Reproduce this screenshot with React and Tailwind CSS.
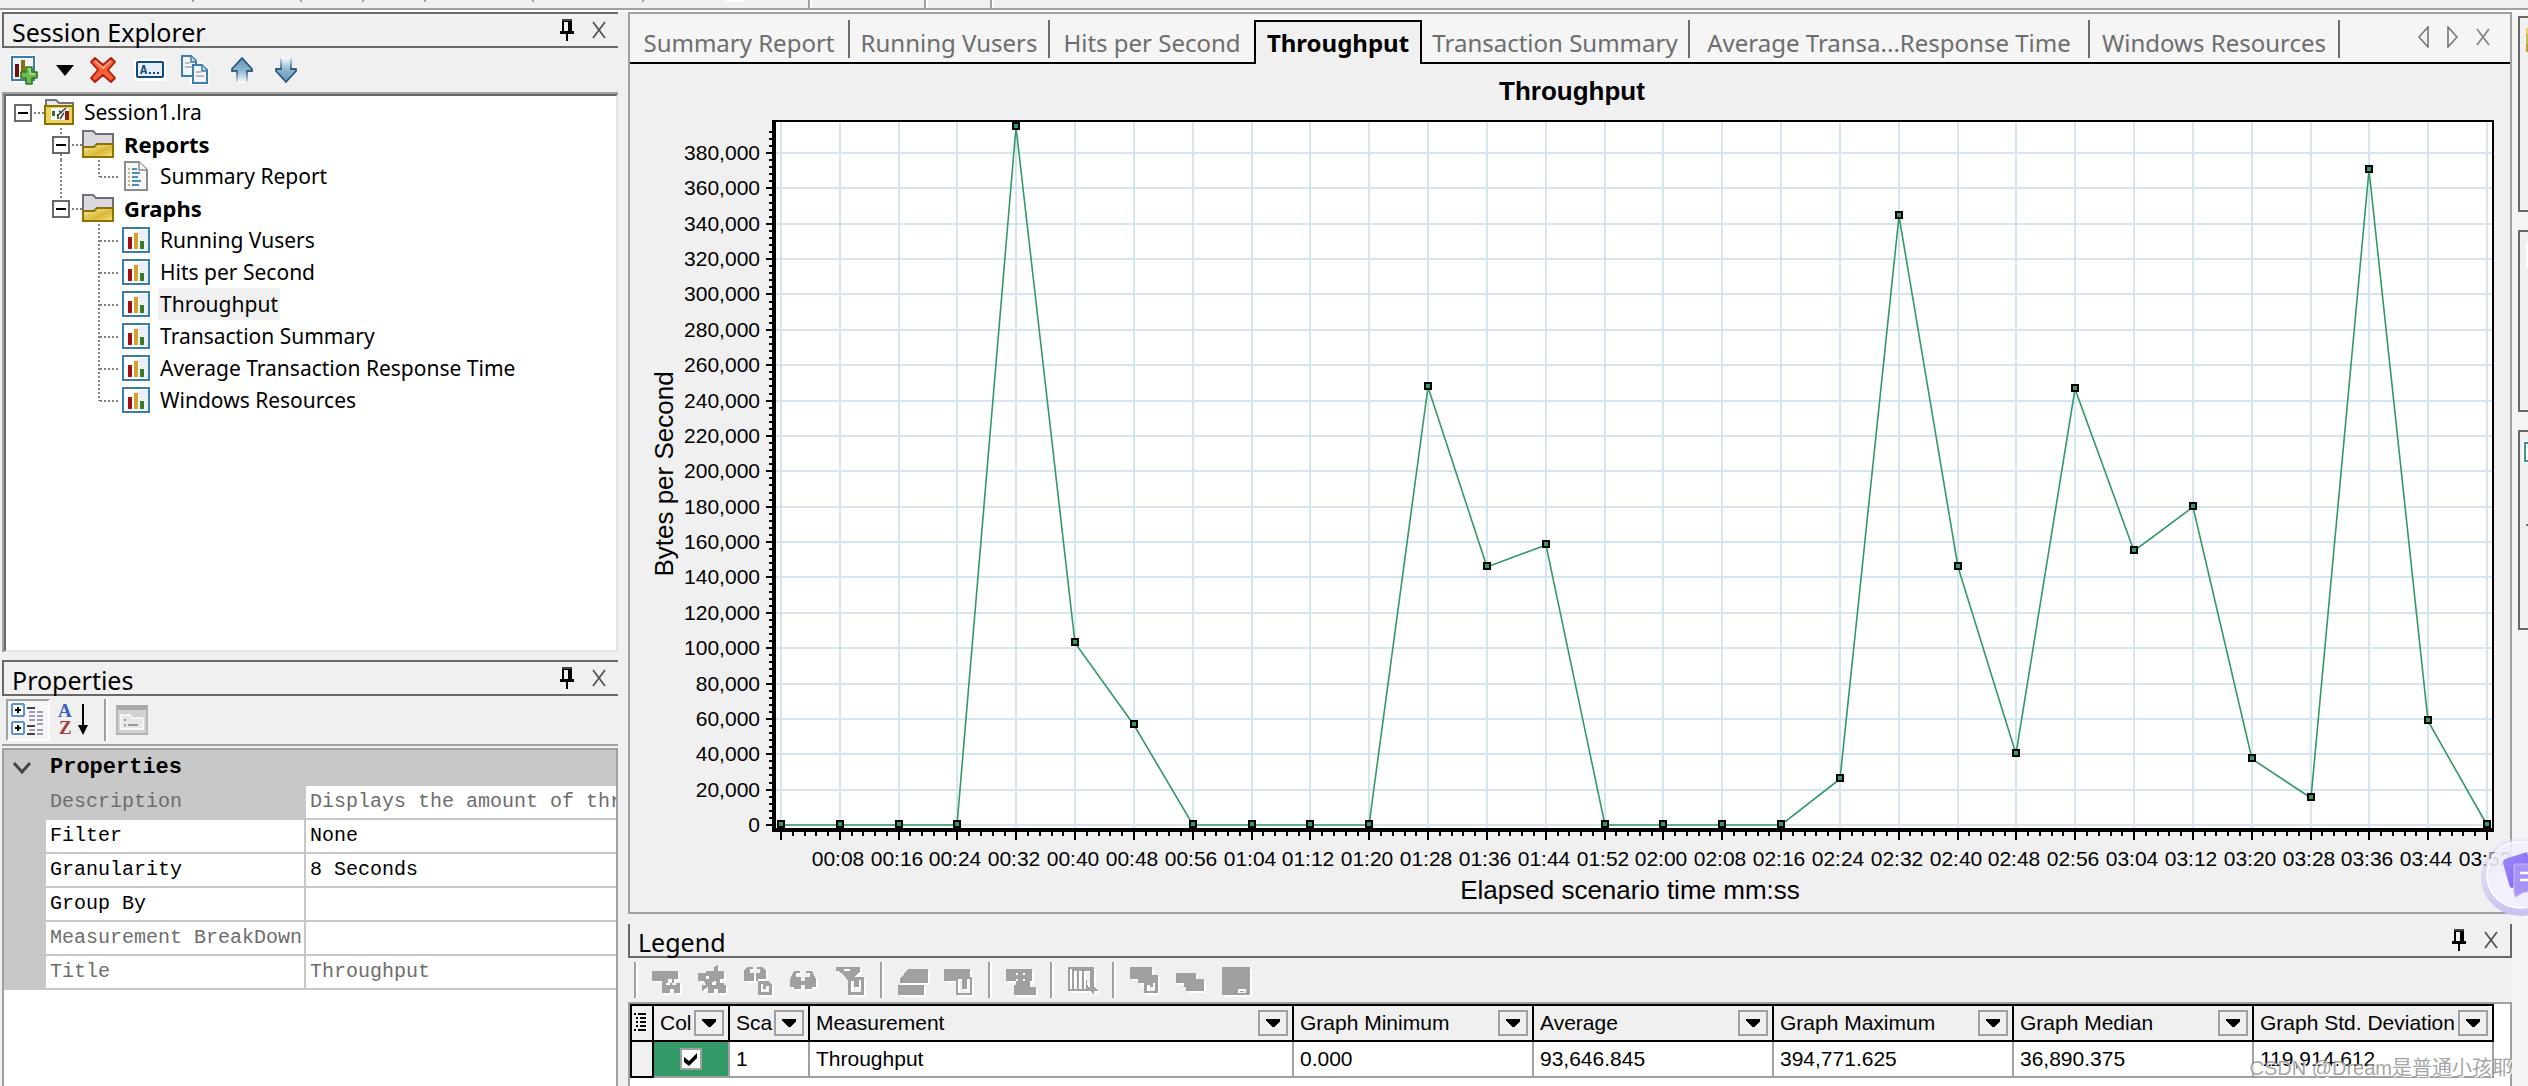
import { useState } from 'react';

const UI_FONT = "font-['Noto_Sans','Open_Sans',sans-serif]";
const GRID_FONT = "font-['Liberation_Sans',Arial,sans-serif]";

const treeGraphs = [
  'Running Vusers',
  'Hits per Second',
  'Throughput',
  'Transaction Summary',
  'Average Transaction Response Time',
  'Windows Resources',
];

const tabs = [
  { name: 'Summary Report', width: 'w-[220px]' },
  { name: 'Running Vusers', width: 'w-[200px]' },
  { name: 'Hits per Second', width: 'w-[204px]' },
  { name: 'Throughput', width: 'w-[168px]' },
  { name: 'Transaction Summary', width: 'w-[268px]' },
  { name: 'Average Transa...Response Time', width: 'w-[400px]' },
  { name: 'Windows Resources', width: 'w-[250px]' },
];

const properties = [
  { name: 'Description', value: 'Displays the amount of throughput', readOnly: true, selected: true },
  { name: 'Filter', value: 'None' },
  { name: 'Granularity', value: '8 Seconds' },
  { name: 'Group By', value: '' },
  { name: 'Measurement BreakDown', value: '', readOnly: true },
  { name: 'Title', value: 'Throughput', readOnly: true },
];

// Bytes per second, one sample every 8 seconds
const samples = [
  0, 0, 0, 0, 394771, 102900, 56700, 0, 0, 0, 0, 247700, 146000, 158300, 0, 0, 0, 0,
  26200, 344400, 146000, 39900, 246800, 155200, 179800, 37600, 15300, 370400, 59000, 0,
];

const legendColumns = [
  { name: 'Col', value: null },
  { name: 'Sca', value: '1' },
  { name: 'Measurement', value: 'Throughput' },
  { name: 'Graph Minimum', value: '0.000' },
  { name: 'Average', value: '93,646.845' },
  { name: 'Graph Maximum', value: '394,771.625' },
  { name: 'Graph Median', value: '36,890.375' },
  { name: 'Graph Std. Deviation', value: '119,914.612' },
];

/* ---------- icons ---------- */

const PinIcon = () => (
  <svg width="14" height="22" viewBox="0 0 14 22" shapeRendering="crispEdges">
    <path d="M2 0H12V12H14V15H8V22H6V15H0V12H2Z" fill="#000" />
    <path d="M4 3H8V12H4Z" fill="#f0f0f0" />
    <path d="M2 0H12V2H2Z" fill="#444" />
  </svg>
);

const CloseIcon = ({ color = '#555' }) => (
  <svg width="14" height="18" viewBox="0 0 14 18">
    <path d="M1 1L13 17M13 1L1 17" stroke={color} strokeWidth="1.8" fill="none" />
  </svg>
);

const AddGraphIcon = () => (
  <svg width="28" height="30" viewBox="0 0 28 30">
    <path d="M0 0H26V28H0Z" fill="#fff" />
    <path d="M2 2H24V25H2Z" fill="#eef4f8" stroke="#3c7fa6" strokeWidth="2" />
    <path d="M5 9H9V22H5Z" fill="#6d0f10" />
    <path d="M11 5H15V20H11Z" fill="#8c6a14" />
    <path d="M16 12H22V17H27V23H22V29H16V23H11V17H16Z" fill="#6db84f" stroke="#2f7a22" strokeWidth="1.6" strokeLinejoin="round" />
    <path d="M18 14H20V19H25" stroke="#b6e29c" strokeWidth="1.4" fill="none" />
  </svg>
);

const CaretIcon = () => (
  <svg width="18" height="11" viewBox="0 0 18 11">
    <path d="M0 0H18L9 11Z" fill="#000" />
  </svg>
);

const DeleteIcon = () => (
  <svg width="26" height="26" viewBox="0 0 26 26">
    <path
      d="M5 1L13 8L21 1L25 5L18 13L25 21L21 25L13 18L5 25L1 21L8 13L1 5Z"
      fill="#f4603a"
      stroke="#b31d0c"
      strokeWidth="1.8"
      strokeLinejoin="round"
    />
    <path d="M5 4L13 11L21 4" stroke="#ff9d7c" strokeWidth="2" fill="none" />
  </svg>
);

const RenameIcon = () => (
  <svg width="32" height="22" viewBox="0 0 32 22">
    <rect x="0" y="0" width="32" height="22" fill="#fff" />
    <rect x="3" y="3" width="26" height="15" rx="1" fill="#e3eef6" stroke="#12487c" strokeWidth="2" />
    <text x="6" y="15" fontSize="12" fontWeight="bold" fill="#12487c" fontFamily="Liberation Mono, monospace">A</text>
    <path d="M15 13H17V15H15ZM19 13H21V15H19ZM23 13H25V15H23Z" fill="#12487c" />
  </svg>
);

const CopyIcon = () => (
  <svg width="30" height="32" viewBox="0 0 30 32">
    <path d="M10 9H23L29 15V31H10Z" fill="#fff" />
    <path d="M2 2H11L16 7V22H2Z" fill="#f2f6fa" stroke="#3c7fa6" strokeWidth="2" />
    <path d="M11 2V8H16" fill="#bcdcec" stroke="#3c7fa6" strokeWidth="1.5" />
    <path d="M5 9H10M5 13H12" stroke="#b8bcc0" strokeWidth="2" />
    <path d="M13 11H22L27 16V29H13Z" fill="#f2f6fa" stroke="#3c7fa6" strokeWidth="2" />
    <path d="M22 11V17H27" fill="#bcdcec" stroke="#3c7fa6" strokeWidth="1.5" />
    <path d="M16 18H21M16 22H24" stroke="#b8bcc0" strokeWidth="2" />
  </svg>
);

const ArrowIcon = ({ down }) => (
  <svg width="26" height="28" viewBox="0 0 26 28" className={down ? 'rotate-180' : ''}>
    <defs>
      <linearGradient id="arrowFill" x1="0" y1="0" x2="0" y2="1">
        <stop offset="0" stopColor="#5f93b8" />
        <stop offset="0.5" stopColor="#8fb8cc" />
        <stop offset="1" stopColor="#fff" />
      </linearGradient>
      <linearGradient id="arrowEdge" x1="0" y1="0" x2="0" y2="1">
        <stop offset="0.5" stopColor="#24557f" />
        <stop offset="1" stopColor="#c8d8e4" />
      </linearGradient>
    </defs>
    <path d="M13 2L23 13V15H18V27H8V15H3V13Z" fill="url(#arrowFill)" />
    <path d="M8 26V15H3V13L13 2L23 13V15H18V26" stroke="url(#arrowEdge)" strokeWidth="1.8" fill="none" />
  </svg>
);

const SessionIcon = () => (
  <svg width="32" height="28" viewBox="0 0 32 28">
    <path d="M2 7V2H12L15 5H29V10" fill="#e8e8ec" stroke="#73737b" strokeWidth="2" />
    <path d="M1 8H29V26H1Z" fill="#ecd25a" stroke="#8a7300" strokeWidth="2" />
    <path d="M7 10H25V22H7Z" fill="#fff" />
    <path d="M8 13H11V18H8ZM13 16H15V21H13Z" fill="#3e6e33" />
    <path d="M13 18L22 10M15 13L18 15M16 21L20 15" stroke="#444" strokeWidth="1.6" />
    <path d="M21 13H25V22H21Z" fill="#8a1d12" />
  </svg>
);

const FolderIcon = () => (
  <svg width="32" height="30" viewBox="0 0 32 30">
    <defs>
      <linearGradient id="folderFront" x1="0" y1="0" x2="1" y2="1">
        <stop offset="0" stopColor="#f7ebb0" />
        <stop offset="0.6" stopColor="#dcb836" />
        <stop offset="1" stopColor="#f2e48c" />
      </linearGradient>
    </defs>
    <path d="M1 27V2H11L14 5H31V20H1Z" fill="#d8d8de" stroke="#6e6e78" strokeWidth="2" />
    <path d="M1 18H12L15 15H31V28H1Z" fill="url(#folderFront)" stroke="#8a7300" strokeWidth="2" />
  </svg>
);

const ReportIcon = () => (
  <svg width="32" height="30" viewBox="0 0 32 30">
    <path d="M3 1H17L25 9V29H3Z" fill="#f6f6f6" stroke="#8c8c8c" strokeWidth="2" />
    <path d="M17 1V9H25" fill="#fff" stroke="#8c8c8c" strokeWidth="1.6" />
    <path d="M6 8H8M6 12H8M6 16H8M6 20H8M6 24H8" stroke="#c39a46" strokeWidth="1.6" />
    <path d="M10 8H15M10 12H18M10 16H16M10 20H19M10 24H17" stroke="#4c8fb4" strokeWidth="2" />
  </svg>
);

const GraphIcon = () => (
  <svg width="32" height="26" viewBox="0 0 32 26" shapeRendering="crispEdges">
    <path d="M1 1H27V25H1Z" fill="#fff" stroke="#3c7fa6" strokeWidth="2" />
    <path d="M17 3H26V24H17Z" fill="#eaf0f4" />
    <path d="M6 10H10V22H6Z" fill="#a01010" />
    <path d="M12 6H16V22H12Z" fill="#d2a22a" />
    <path d="M18 14H22V22H18Z" fill="#3f7a2c" />
  </svg>
);

const CategorizedIcon = () => (
  <svg width="34" height="34" viewBox="0 0 34 34" shapeRendering="crispEdges">
    <rect x="1" y="1" width="12" height="12" rx="2" fill="#fff" stroke="#5b93cf" strokeWidth="2" />
    <rect x="1" y="19" width="12" height="12" rx="2" fill="#fff" stroke="#5b93cf" strokeWidth="2" />
    <path d="M4 7H10M7 4V10M4 25H10M7 22V28" stroke="#000" strokeWidth="2" />
    <path d="M16 5H24M16 23H24M16 31H24" stroke="#444" strokeWidth="2" />
    <path d="M18 9H24M18 13H24M18 17H24M18 27H24M26 9H32M26 13H32M26 17H32M26 21H32M26 27H32M26 31H32" stroke="#a29bb5" strokeWidth="2" />
  </svg>
);

const SortIcon = () => (
  <svg width="32" height="34" viewBox="0 0 32 34">
    <text x="0" y="14" fontSize="19" fontWeight="bold" fill="#3a5fc4" fontFamily="Liberation Serif, serif">A</text>
    <text x="1" y="31" fontSize="19" fontWeight="bold" fill="#a83a3a" fontFamily="Liberation Serif, serif">Z</text>
    <path d="M25 1V24" stroke="#000" strokeWidth="2" />
    <path d="M20 22H30L25 32Z" fill="#000" />
  </svg>
);

const PropertyPagesIcon = () => (
  <svg width="32" height="30" viewBox="0 0 32 30">
    <rect x="1" y="1" width="30" height="28" fill="#d2d2d2" stroke="#b4b4b4" strokeWidth="2" />
    <path d="M0 0H32V5H0Z" fill="#aaa" />
    <path d="M5 10H14L16 13H27V24H5Z" fill="#e6e6e6" stroke="#f4f4f4" strokeWidth="2" />
    <path d="M8 15H10M8 20H10M12 20H22" stroke="#999" strokeWidth="2" />
  </svg>
);

// Disabled toolbar glyphs, embossed with a white shadow
const legendIcons = {
  show: 'M0 8H26V16H22V20H20V16H16V20H10V18H0ZM10 20H14V22H18V20H20V22H24V20H28V30H22V26H18V30H10Z',
  animate: 'M16 4L20 2V8H26V16H22V20H26V22H28V30H20V26H16V30H10V24L4 28V22H8L6 18H0V10H8V8H16ZM8 13V16H11V13ZM14 19V22H18V18Z',
  linkDoc: 'M0 7L4 4H9V6H6V10H10V18H0ZM12 10H16V6H13V4H18L22 7V16H14V18H12ZM14 18H24L28 22V32H14ZM17 21V29H25V23H22V26H19V21Z',
  glasses: 'M0 16L4 8H10V10H6V14H11V18H15V14H20V10H16V8H22L26 16V24H22V26H15V22H11V26H4V24H0Z',
  filterDoc: 'M0 4H24V8L18 14H28V32H12V18L8 12L2 8H0ZM8 6V8H14V6ZM15 18V29H25V17H23V24H18V18Z',
  sheets: 'M10 6H30V20H2V16ZM0 22H26V32H0Z',
  sheetDoc: 'M0 6H26V14H28V32H12V18H0ZM14 16V30H26V16H23V26H18V16Z',
  merge: 'M0 6H26V18H24V24H30V32H8V22H10V18H0ZM10 10V12H12V10ZM17 10V12H19V10ZM10 16V18H12V16ZM17 16V18H19V16Z',
  columns: 'M0 4H26V24L30 28H26V32L22 28H0ZM2 6V26H4V6ZM6 8V26H9V8ZM11 8V26H14V8ZM16 8V26H18V14L20 24H22V8Z',
  layers: 'M0 4H22V12H28V30H14V20H8V16H0ZM17 22V28H25V20H23V24H20V22Z',
  blocks: 'M0 10H20V16H28V28H10V24H8V20H0Z',
  note: 'M0 4H28V32H0ZM16 26V30H24V26ZM18 28H22V29H18Z',
};

const legendToolbar = [
  ['show', 'animate', 'linkDoc', 'glasses', 'filterDoc'],
  ['sheets', 'sheetDoc'],
  ['merge'],
  ['columns'],
  ['layers', 'blocks', 'note'],
];

const LegendIcon = ({ name }) => (
  <svg
    width="30"
    height="34"
    viewBox="0 0 30 34"
    shapeRendering="crispEdges"
    className="overflow-visible drop-shadow-[2px_2px_0_#ffffff]"
  >
    <path d={legendIcons[name]} fill="#a0a0a0" fillRule="evenodd" />
  </svg>
);

/* ---------- shared parts ---------- */

const PanelHeader = ({ title, className = '' }) => (
  <div className={`flex items-center justify-between border-b-2 border-l-2 border-[#696969] pl-2 pr-3 ${className}`}>
    <h2 className="pt-1 text-[25px] leading-8 whitespace-nowrap">{title}</h2>
    <div className="flex items-center gap-[18px]">
      <button type="button" aria-label="Auto Hide"><PinIcon /></button>
      <button type="button" aria-label="Close"><CloseIcon /></button>
    </div>
  </div>
);

const Expander = ({ above, below, label }) => (
  <button type="button" aria-label={label} className="h-8 w-[18px]">
    <svg width="18" height="32" viewBox="0 0 18 32" shapeRendering="crispEdges">
      {above && <path d="M9 0V8" stroke="#808080" strokeWidth="2" strokeDasharray="2 2" />}
      {below && <path d="M9 26V32" stroke="#808080" strokeWidth="2" strokeDasharray="2 2" />}
      <rect x="1" y="9" width="16" height="16" fill="#fff" stroke="#696969" strokeWidth="2" />
      <path d="M4 17H14" stroke="#000" strokeWidth="2" />
    </svg>
  </button>
);

const Dots = () => (
  <svg width="12" height="32" viewBox="0 0 12 32" shapeRendering="crispEdges">
    <path d="M2 17H12" stroke="#808080" strokeWidth="2" strokeDasharray="2 2" />
  </svg>
);

const LeafRow = ({ label, icon, outer, last, selected }) => (
  <li className="flex h-8 items-center pl-12">
    <svg width="70" height="32" viewBox="0 0 70 32" shapeRendering="crispEdges">
      {outer && <path d="M9 0V32" stroke="#808080" strokeWidth="2" strokeDasharray="2 2" />}
      <path d={last ? 'M47 0V17' : 'M47 0V32'} stroke="#808080" strokeWidth="2" strokeDasharray="2 2" />
      <path d="M48 17H68" stroke="#808080" strokeWidth="2" strokeDasharray="2 2" />
    </svg>
    {icon}
    <span className={`ml-1 h-8 px-0.5 leading-8 ${selected ? 'bg-[#f0f0f0]' : ''}`}>{label}</span>
  </li>
);

/* ---------- left column ---------- */

const SessionExplorer = () => (
  <section className="flex flex-col">
    <PanelHeader title="Session Explorer" className="h-9 border-t-2" />
    <div className="flex h-11 items-center pl-2">
      <button type="button" aria-label="Add graph" className="w-[34px]"><AddGraphIcon /></button>
      <button type="button" aria-label="More graphs" className="ml-3 w-[34px]"><CaretIcon /></button>
      <button type="button" aria-label="Delete" className="w-[44px]"><DeleteIcon /></button>
      <button type="button" aria-label="Rename" className="w-[46px]"><RenameIcon /></button>
      <button type="button" aria-label="Duplicate" className="w-[49px]"><CopyIcon /></button>
      <button type="button" aria-label="Move up" className="w-[44px]"><ArrowIcon /></button>
      <button type="button" aria-label="Move down" className="w-[44px]"><ArrowIcon down /></button>
    </div>
    <div className="border-t-2 border-l-2 border-[#a0a0a0]">
      <div className="min-h-[558px] border-2 border-t-[#696969] border-r-[#e3e3e3] border-b-[#e3e3e3] border-l-[#696969] bg-white text-[21px]">
        <ul>
          <li>
            <div className="flex h-8 items-center pl-2">
              <Expander label="Collapse Session1.lra" />
              <Dots />
              <SessionIcon />
              <span className="ml-1 px-1 leading-7">Session1.lra</span>
            </div>
            <ul>
              <li>
                <div className="flex h-8 items-center pl-[46px]">
                  <Expander above below label="Collapse Reports" />
                  <Dots />
                  <FolderIcon />
                  <span className="ml-1.5 px-1 text-[22px] leading-7 font-bold">Reports</span>
                </div>
                <ul className="-ml-0.5">
                  <LeafRow label="Summary Report" icon={<ReportIcon />} outer last />
                </ul>
              </li>
              <li>
                <div className="flex h-8 items-center pl-[46px]">
                  <Expander above label="Collapse Graphs" />
                  <Dots />
                  <FolderIcon />
                  <span className="ml-1.5 px-1 text-[22px] leading-7 font-bold">Graphs</span>
                </div>
                <ul className="-ml-0.5">
                  {treeGraphs.map((name, index) => (
                    <LeafRow
                      key={name}
                      label={name}
                      icon={<GraphIcon />}
                      last={index === treeGraphs.length - 1}
                      selected={name === 'Throughput'}
                    />
                  ))}
                </ul>
              </li>
            </ul>
          </li>
        </ul>
      </div>
    </div>
  </section>
);

const PropertiesPanel = () => (
  <section className="mt-2 flex flex-1 flex-col">
    <PanelHeader title="Properties" className="h-9 border-t-2" />
    <div className="flex h-[50px] items-center border-b-2 border-[#a0a0a0] pl-1">
      <button
        type="button"
        aria-label="Categorized"
        className="flex h-[42px] w-11 items-center justify-center border-2 border-t-[#a0a0a0] border-r-white border-b-white border-l-[#a0a0a0] bg-[#f6f6f6]"
      >
        <CategorizedIcon />
      </button>
      <button type="button" aria-label="Alphabetical" className="flex h-[42px] w-12 items-center justify-center">
        <SortIcon />
      </button>
      <div className="mx-1.5 h-[42px] w-1 border-l-2 border-[#a0a0a0] bg-white"></div>
      <button type="button" aria-label="Property Pages" className="ml-0.5"><PropertyPagesIcon /></button>
    </div>
    <div className="mt-0.5 flex-1 border-2 border-b-0 border-[#a0a0a0] bg-white font-['Liberation_Mono',monospace] text-[20px]">
      <table className="w-full table-fixed border-separate border-spacing-0">
        <colgroup>
          <col className="w-[42px]" />
          <col className="w-[260px]" />
          <col />
        </colgroup>
        <thead>
          <tr className="h-9 bg-[#c8c8c8]">
            <td className="pl-2">
              <svg width="20" height="14" viewBox="0 0 20 14">
                <path d="M2 2L10 11L18 2" stroke="#444" strokeWidth="3" fill="none" />
              </svg>
            </td>
            <th colSpan="2" className="pl-1 text-left text-[22px] leading-8">Properties</th>
          </tr>
        </thead>
        <tbody>
          {properties.map((row) => (
            <tr key={row.name} className={`h-[34px] leading-7 ${row.readOnly ? 'text-[#6d6d6d]' : ''}`}>
              <td className="bg-[#c8c8c8]"></td>
              <td
                className={`overflow-hidden border-r-2 border-b-2 border-[#c8c8c8] pl-1 whitespace-nowrap ${
                  row.selected ? 'bg-[#c8c8c8]' : ''
                }`}
              >
                {row.name}
              </td>
              <td className="overflow-hidden border-b-2 border-[#c8c8c8] pl-1 whitespace-nowrap">{row.value}</td>
            </tr>
          ))}
        </tbody>
      </table>
    </div>
  </section>
);

/* ---------- chart ---------- */

const X0 = 781;
const X_STEP = (2487 - X0) / 29;
const Y0 = 825;
const Y_STEP = 672 / 19;

const xAt = (i) => Math.round(X0 + i * X_STEP);
const yAt = (value) => Math.round(Y0 - (value / 20000) * Y_STEP);

const timeLabel = (i) => {
  const seconds = i * 8;
  const mm = String(Math.floor(seconds / 60)).padStart(2, '0');
  const ss = String(seconds % 60).padStart(2, '0');
  return `${mm}:${ss}`;
};

const ThroughputChart = () => {
  const yTicks = Array.from({ length: 20 }, (_, i) => i * 20000);
  const yMinor = Array.from({ length: 99 }, (_, i) => Math.round(Y0 - (i * Y_STEP) / 5));
  const xMinor = Array.from({ length: 146 }, (_, i) => Math.round(X0 + (i * X_STEP) / 5));

  return (
    <svg viewBox="630 64 1880 848" className={`block h-auto w-full ${GRID_FONT}`} role="img" aria-label="Throughput">
      <text x="1572" y="100" textAnchor="middle" fontSize="26" fontWeight="bold">Throughput</text>

      <rect x="774" y="121" width="1719" height="709" fill="#fff" />
      <g stroke="#d6e4f2" strokeWidth="2" shapeRendering="crispEdges">
        {samples.map((_, i) => (
          <path key={i} d={`M${xAt(i)} 122V829`} />
        ))}
        {yTicks.map((value) => (
          <path key={value} d={`M776 ${yAt(value)}H2492`} />
        ))}
      </g>

      {/* Frame and axes */}
      <g stroke="#000" fill="none" shapeRendering="crispEdges">
        <path d="M772 121H2493V830" strokeWidth="2" />
        <path d="M774 120V832" strokeWidth="4" />
        <path d="M772 830H2494" strokeWidth="4" />
        {yMinor.map((y) => (
          <path key={y} d={`M769 ${y}H772`} strokeWidth="2" />
        ))}
        {yTicks.map((value) => (
          <path key={value} d={`M766 ${yAt(value)}H772`} strokeWidth="2" />
        ))}
        {xMinor.map((x) => (
          <path key={x} d={`M${x} 832V836`} strokeWidth="2" />
        ))}
        {samples.map((_, i) => (
          <path key={i} d={`M${xAt(i)} 832V840`} strokeWidth="2" />
        ))}
      </g>

      <g fontSize="21" textAnchor="end">
        {yTicks.map((value) => (
          <text key={value} x="760" y={yAt(value) + 7}>{value.toLocaleString('en-US')}</text>
        ))}
      </g>
      <g fontSize="21" textAnchor="middle">
        {samples.map((_, i) => i > 0 && (
          <text key={i} x={xAt(i) - 2} y="866">{timeLabel(i)}</text>
        ))}
      </g>
      <text x="1630" y="899" textAnchor="middle" fontSize="26">Elapsed scenario time mm:ss</text>
      <text transform="translate(673 474) rotate(-90)" textAnchor="middle" fontSize="26">Bytes per Second</text>

      {/* Series */}
      <polyline
        points={samples.map((value, i) => `${xAt(i)},${yAt(value)}`).join(' ')}
        fill="none"
        stroke="#339966"
        strokeWidth="1.6"
      />
      {samples.map((value, i) => (
        <rect
          key={i}
          x={xAt(i) - 3}
          y={yAt(value) - 4}
          width="6"
          height="6"
          fill="#339966"
          stroke="#000"
          strokeWidth="2"
          shapeRendering="crispEdges"
        />
      ))}
    </svg>
  );
};

const GraphPanel = () => {
  const [active, setActive] = useState('Throughput');

  return (
    <section className="border-2 border-[#a0a0a0]">
      <div className="flex h-[50px] items-end bg-[#f5f5f5] text-[24px] text-[#6d6d6d]">
        {tabs.map((tab, index) => {
          const isActive = tab.name === active;
          const beforeActive = tabs[index + 1] && tabs[index + 1].name === active;
          return (
            <button
              key={tab.name}
              type="button"
              onClick={() => setActive(tab.name)}
              className={`h-11 shrink-0 border-black pb-1 whitespace-nowrap ${tab.width} ${
                isActive ? 'border-x-2 border-t-2 bg-[#f0f0f0] font-bold text-black' : 'border-b-2'
              }`}
            >
              <span
                className={`block h-[38px] ${isActive ? 'leading-[42px]' : 'leading-[46px]'} ${
                  isActive || beforeActive ? '' : 'border-r-2 border-[#6d6d6d]'
                }`}
              >
                {tab.name}
              </span>
            </button>
          );
        })}
        <div className="flex h-11 flex-1 items-center justify-end gap-[18px] border-b-2 border-black pr-5 pb-2">
          <button type="button" aria-label="Scroll left">
            <svg width="11" height="22" viewBox="0 0 11 22">
              <path d="M10 1V21L1 11Z" fill="none" stroke="#777" strokeWidth="1.6" />
            </svg>
          </button>
          <button type="button" aria-label="Scroll right">
            <svg width="11" height="22" viewBox="0 0 11 22">
              <path d="M1 1V21L10 11Z" fill="none" stroke="#777" strokeWidth="1.6" />
            </svg>
          </button>
          <button type="button" aria-label="Close tab"><CloseIcon color="#888" /></button>
        </div>
      </div>
      <ThroughputChart />
    </section>
  );
};

/* ---------- legend ---------- */

const LegendPanel = () => {
  const [visible, setVisible] = useState(true);

  return (
    <section className="mt-[10px] flex flex-1 flex-col">
      <PanelHeader title="Legend" className="h-[34px] border-r-2" />
      <div className="flex h-11 items-center pl-1.5">
        {legendToolbar.map((group, index) => (
          <div key={index} className="flex items-center">
            <div className="h-9 w-1 border-l-2 border-[#a0a0a0] bg-white"></div>
            <div className="flex gap-4 px-[14px]">
              {group.map((name) => (
                <button key={name} type="button" aria-label={name} disabled>
                  <LegendIcon name={name} />
                </button>
              ))}
            </div>
          </div>
        ))}
      </div>
      <div className={`flex-1 border-2 border-b-0 border-[#a0a0a0] bg-white pr-4 text-[21px] ${GRID_FONT}`}>
        <table className="w-full table-fixed border-separate border-spacing-0">
          <colgroup>
            <col className="w-6" />
            <col className="w-[76px]" />
            <col className="w-20" />
            <col />
            <col className="w-60" />
            <col className="w-60" />
            <col className="w-60" />
            <col className="w-60" />
            <col className="w-60" />
          </colgroup>
          <thead>
            <tr className="h-[38px] bg-[#f0f0f0]">
              <th className="border-2 border-black p-0">
                <svg width="18" height="24" viewBox="0 0 18 24" shapeRendering="crispEdges">
                  <path
                    d="M2 3H4M6 3H14M4 7H6M8 7H14M4 11H6M8 11H14M4 15H6M8 15H14M2 19H4M6 19H14"
                    stroke="#000"
                    strokeWidth="2"
                  />
                </svg>
              </th>
              {legendColumns.map((column) => (
                <th key={column.name} className="border-y-2 border-r-2 border-black p-0 text-left font-normal">
                  <div className="flex items-center pr-1 pl-1.5">
                    <span className="min-w-0 flex-1 overflow-hidden whitespace-nowrap">{column.name}</span>
                    <button
                      type="button"
                      aria-label={`Filter ${column.name}`}
                      className="flex h-[26px] w-[30px] shrink-0 items-center justify-center border-2 border-[#a0a0a0]"
                    >
                      <svg width="16" height="9" viewBox="0 0 16 9" shapeRendering="crispEdges">
                        <path d="M1 0H15V2L9 8H7L1 2Z" fill="#000" />
                      </svg>
                    </button>
                  </div>
                </th>
              ))}
            </tr>
          </thead>
          <tbody>
            <tr className="h-9">
              <td className="border-x-2 border-b-2 border-black bg-[#f0f0f0]"></td>
              {legendColumns.map((column) =>
                column.value === null ? (
                  <td key={column.name} className="border-r-2 border-b-2 border-[#a0a0a0] bg-[#339966] p-0">
                    <label className="mx-auto grid h-[22px] w-[22px] place-items-center">
                      <input
                        type="checkbox"
                        aria-label="Show Throughput"
                        checked={visible}
                        onChange={(e) => setVisible(e.target.checked)}
                        className="col-start-1 row-start-1 h-[22px] w-[22px] appearance-none border-2 border-[#a0a0a0] bg-white"
                      />
                      {visible && (
                        <svg width="14" height="14" viewBox="0 0 14 14" className="pointer-events-none col-start-1 row-start-1">
                          <path d="M0 5L5 9L13 1V6L5 14L0 10Z" fill="#000" />
                        </svg>
                      )}
                    </label>
                  </td>
                ) : (
                  <td
                    key={column.name}
                    className="overflow-hidden border-r-2 border-b-2 border-[#a0a0a0] p-0 pl-1.5 whitespace-nowrap"
                  >
                    {column.value}
                  </td>
                )
              )}
            </tr>
          </tbody>
        </table>
      </div>
    </section>
  );
};

/* ---------- docked strip on the right edge ---------- */

const RightDock = () => (
  <aside className="flex w-4 shrink-0 flex-col gap-[18px] overflow-hidden bg-[#f5f5f5] pt-1 pl-1.5">
    <div className="h-[196px] border-y-2 border-l-2 border-[#696969] bg-[#f0f0f0] pt-[10px] pl-1.5">
      <div className="h-1.5 bg-[#fcc860]"></div>
      <div className="h-[10px] bg-[#c0c050]"></div>
      <div className="h-2 bg-[#cc9a35]"></div>
    </div>
    <div className="h-[182px] border-y-2 border-l-2 border-[#696969] bg-[#f0f0f0] pt-[10px] pl-1.5">
      <div className="h-[26px] bg-white"></div>
    </div>
    <div className="h-[200px] border-y-2 border-l-2 border-[#696969] bg-[#f0f0f0] pt-2 pl-0.5">
      <div className="border-2 border-r-0 border-white">
        <div className="h-5 border-2 border-r-0 border-[#3a9a9a] bg-white"></div>
      </div>
      <div className="mt-[60px] ml-1 h-0.5 bg-[#8a6a60]"></div>
    </div>
  </aside>
);

const AssistantBubble = () => (
  <button type="button" aria-label="Assistant" className="absolute top-[837px] -right-8 h-[80px] w-[80px]">
    <svg width="80" height="80" viewBox="0 0 80 80">
      <defs>
        <linearGradient id="ring" x1="0" y1="0" x2="0" y2="1">
          <stop offset="0" stopColor="#e4dff8" stopOpacity="0.5" />
          <stop offset="1" stopColor="#c9c0f4" />
        </linearGradient>
        <linearGradient id="disc" x1="0" y1="0" x2="1" y2="1">
          <stop offset="0.1" stopColor="#f6f4fd" stopOpacity="0.5" />
          <stop offset="0.4" stopColor="#f4f1fe" />
          <stop offset="1" stopColor="#f0ecfe" />
        </linearGradient>
        <linearGradient id="card" x1="0" y1="0" x2="1" y2="1">
          <stop offset="0" stopColor="#a08cf8" />
          <stop offset="1" stopColor="#7c5cf4" />
        </linearGradient>
      </defs>
      <circle cx="40" cy="40" r="39" fill="url(#ring)" />
      <circle cx="40" cy="38" r="33" fill="url(#disc)" stroke="#fff" strokeWidth="1.5" />
      <path d="M25 22L47 15L55 40L32 51Q30 51 29 47L23 26Q23 23 25 22Z" fill="url(#card)" />
      <path d="M34 29Q34 27 36 27H60V52L42 56L36 60Q34 58 34 55Z" fill="#a893f7" stroke="#c7bafb" strokeWidth="1.2" />
      <path d="M40 36H56M40 43H56" stroke="#fff" strokeWidth="2.4" />
    </svg>
  </button>
);

const App = () => (
  <div className={`relative flex min-h-screen flex-col overflow-hidden bg-[#f0f0f0] text-black ${UI_FONT}`}>
    {/* Bottom edge of the application toolbar */}
    <div className="flex h-2 items-start">
      <div className="ml-48 h-0.5 w-0.5 bg-[#a0a0a0]"></div>
      <div className="ml-[106px] h-0.5 w-0.5 bg-[#a0a0a0]"></div>
      <div className="ml-[60px] h-0.5 w-0.5 bg-[#a0a0a0]"></div>
      <div className="ml-[60px] h-0.5 w-0.5 bg-[#a0a0a0]"></div>
      <div className="ml-[106px] h-0.5 w-0.5 bg-[#a0a0a0]"></div>
      <div className="ml-[108px] h-0.5 w-0.5 bg-[#a0a0a0]"></div>
      <div className="ml-[82px] h-0.5 w-[18px] bg-white"></div>
      <div className="ml-16 h-2 w-1 border-l-2 border-[#a0a0a0] bg-white"></div>
      <div className="ml-[112px] h-2 w-1 border-l-2 border-[#a0a0a0] bg-white"></div>
      <div className="ml-[62px] h-2 w-1 border-l-2 border-[#a0a0a0] bg-white"></div>
    </div>
    <div className="h-1 border-t-2 border-[#a0a0a0] bg-white"></div>

    <div className="flex flex-1">
      <div className="ml-0.5 flex w-[616px] shrink-0 flex-col">
        <SessionExplorer />
        <PropertiesPanel />
      </div>
      <main className="ml-[10px] flex min-w-0 flex-1 flex-col">
        <GraphPanel />
        <LegendPanel />
      </main>
      <RightDock />
    </div>

    <AssistantBubble />
    <p className="absolute right-4 bottom-1 font-['Liberation_Sans','Noto_Sans_CJK_SC',sans-serif] text-[20px] leading-7 text-[#8c8c8c]/80 [text-shadow:1px_1px_0_#ffffff]">
      CSDN @Dream是普通小孩耶
    </p>
  </div>
);

export default App;
